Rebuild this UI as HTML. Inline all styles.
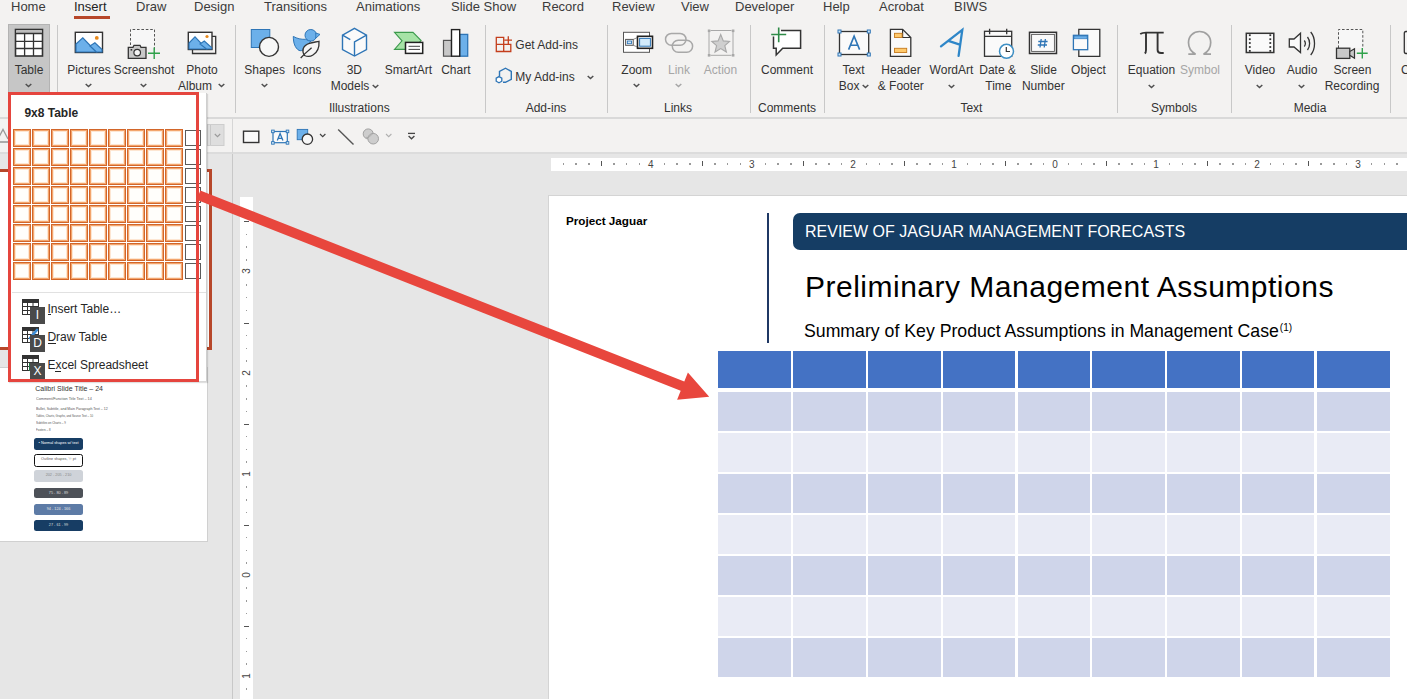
<!DOCTYPE html>
<html><head><meta charset="utf-8">
<style>
*{margin:0;padding:0;box-sizing:border-box}
html,body{width:1407px;height:699px;overflow:hidden;background:#e6e6e6;font-family:"Liberation Sans",sans-serif;position:relative}
.a{position:absolute}
.t{position:absolute;white-space:nowrap;line-height:1}
#top{left:0;top:0;width:1407px;height:119px;background:#f3f2f1}
#rbot{left:0;top:117px;width:1407px;height:2px;background:#d9d9d9}
#qat{left:0;top:119px;width:1407px;height:34px;background:#f3f2f1}
#qbot{left:0;top:152px;width:1407px;height:2px;background:#dcdcdc}
.tab{font-size:13px;color:#3b3b3b;top:0px}
.lb{font-size:12px;color:#333}
.gl{font-size:11.5px;color:#3b3b3b;top:103px}
.dis{color:#a6a6a6}
.sep{position:absolute;width:1px;background:#c8c8c8;top:25px;height:88px}
.cell{width:18px;height:18px;border:1px solid #d2662a;box-shadow:inset 0 0 0 1px #f3a56c,inset 0 0 0 2px #fde6d2;background:#fffefb}
.gcell{width:16px;height:16px;border:1.3px solid #5a5a5a;background:#fff}
.chev{position:absolute;width:6px;height:4px}
</style></head>
<body>
<div id="top" class="a"></div>
<div id="rbot" class="a"></div>
<div id="qat" class="a"></div>
<div id="qbot" class="a"></div>

<!-- tabs -->
<div class="t tab" style="left:11px">Home</div>
<div class="t tab" style="left:74px;color:#222">Insert</div>
<div class="a" style="left:74px;top:16px;width:36px;height:3px;background:#b7472a"></div>
<div class="t tab" style="left:136px">Draw</div>
<div class="t tab" style="left:194px">Design</div>
<div class="t tab" style="left:264px">Transitions</div>
<div class="t tab" style="left:356px">Animations</div>
<div class="t tab" style="left:451px">Slide Show</div>
<div class="t tab" style="left:542px">Record</div>
<div class="t tab" style="left:612px">Review</div>
<div class="t tab" style="left:681px">View</div>
<div class="t tab" style="left:735px">Developer</div>
<div class="t tab" style="left:823px">Help</div>
<div class="t tab" style="left:879px">Acrobat</div>
<div class="t tab" style="left:954px">BIWS</div>

<!-- ribbon -->
<div class="a" style="left:8px;top:24px;width:42px;height:70px;background:#c6c6c6;border:1px solid #b3b3b3"></div>
<div class="sep" style="left:57px"></div>
<div class="sep" style="left:235px"></div>
<div class="sep" style="left:485px"></div>
<div class="sep" style="left:607px"></div>
<div class="sep" style="left:750px"></div>
<div class="sep" style="left:824px"></div>
<div class="sep" style="left:1117px"></div>
<div class="sep" style="left:1231px"></div>
<div class="sep" style="left:1390px"></div>

<!--LABELS-->
<div class="t lb " style="left:-31.0px;width:120px;text-align:center;top:63.6px">Table</div>
<div class="t lb " style="left:29.0px;width:120px;text-align:center;top:63.6px">Pictures</div>
<div class="t lb " style="left:84.0px;width:120px;text-align:center;top:63.6px">Screenshot</div>
<div class="t lb " style="left:142.0px;width:120px;text-align:center;top:63.6px">Photo</div>
<div class="t lb " style="left:204.6px;width:120px;text-align:center;top:63.6px">Shapes</div>
<div class="t lb " style="left:247.0px;width:120px;text-align:center;top:63.6px">Icons</div>
<div class="t lb " style="left:294.3px;width:120px;text-align:center;top:63.6px">3D</div>
<div class="t lb " style="left:348.4px;width:120px;text-align:center;top:63.6px">SmartArt</div>
<div class="t lb " style="left:395.8px;width:120px;text-align:center;top:63.6px">Chart</div>
<div class="t lb " style="left:576.7px;width:120px;text-align:center;top:63.6px">Zoom</div>
<div class="t lb dis" style="left:619.0px;width:120px;text-align:center;top:63.6px">Link</div>
<div class="t lb dis" style="left:660.5px;width:120px;text-align:center;top:63.6px">Action</div>
<div class="t lb " style="left:727.0px;width:120px;text-align:center;top:63.6px">Comment</div>
<div class="t lb " style="left:793.6px;width:120px;text-align:center;top:63.6px">Text</div>
<div class="t lb " style="left:841.0px;width:120px;text-align:center;top:63.6px">Header</div>
<div class="t lb " style="left:840.8px;width:120px;text-align:center;top:79.6px">& Footer</div>
<div class="t lb " style="left:891.5px;width:120px;text-align:center;top:63.6px">WordArt</div>
<div class="t lb " style="left:937.6px;width:120px;text-align:center;top:63.6px">Date &amp;</div>
<div class="t lb " style="left:938.4px;width:120px;text-align:center;top:79.6px">Time</div>
<div class="t lb " style="left:983.5px;width:120px;text-align:center;top:63.6px">Slide</div>
<div class="t lb " style="left:983.3px;width:120px;text-align:center;top:79.6px">Number</div>
<div class="t lb " style="left:1028.4px;width:120px;text-align:center;top:63.6px">Object</div>
<div class="t lb " style="left:1091.5px;width:120px;text-align:center;top:63.6px">Equation</div>
<div class="t lb dis" style="left:1140.0px;width:120px;text-align:center;top:63.6px">Symbol</div>
<div class="t lb " style="left:1200.0px;width:120px;text-align:center;top:63.6px">Video</div>
<div class="t lb " style="left:1242.0px;width:120px;text-align:center;top:63.6px">Audio</div>
<div class="t lb " style="left:1292.4px;width:120px;text-align:center;top:63.6px">Screen</div>
<div class="t lb " style="left:1292.0px;width:120px;text-align:center;top:79.6px">Recording</div>
<div class="t lb " style="left:299.3px;width:120px;text-align:center;top:102.3px">Illustrations</div>
<div class="t lb " style="left:486.0px;width:120px;text-align:center;top:102.3px">Add-ins</div>
<div class="t lb " style="left:618.0px;width:120px;text-align:center;top:102.3px">Links</div>
<div class="t lb " style="left:727.0px;width:120px;text-align:center;top:102.3px">Comments</div>
<div class="t lb " style="left:911.4px;width:120px;text-align:center;top:102.3px">Text</div>
<div class="t lb " style="left:1114.0px;width:120px;text-align:center;top:102.3px">Symbols</div>
<div class="t lb " style="left:1250.0px;width:120px;text-align:center;top:102.3px">Media</div>
<div class="t lb " style="left:178px;top:79.6px">Album</div>
<div class="t lb " style="left:330.7px;top:79.6px">Models</div>
<div class="t lb " style="left:838.8px;top:79.6px">Box</div>
<div class="t lb " style="left:515.3px;top:39.2px">Get Add-ins</div>
<div class="t lb " style="left:515.3px;top:70.8px">My Add-ins</div>
<div class="t lb " style="left:1401px;top:63.6px">C</div>
<svg class="a" style="left:25.2px;top:83.4px" width="7" height="5"><polyline points="0.7,1 3.5,3.6 6.3,1" fill="none" stroke="#505050" stroke-width="1.5"/></svg>
<svg class="a" style="left:85.0px;top:83.4px" width="7" height="5"><polyline points="0.7,1 3.5,3.6 6.3,1" fill="none" stroke="#505050" stroke-width="1.5"/></svg>
<svg class="a" style="left:140.0px;top:83.4px" width="7" height="5"><polyline points="0.7,1 3.5,3.6 6.3,1" fill="none" stroke="#505050" stroke-width="1.5"/></svg>
<svg class="a" style="left:217.5px;top:83.3px" width="7" height="5"><polyline points="0.7,1 3.5,3.6 6.3,1" fill="none" stroke="#505050" stroke-width="1.5"/></svg>
<svg class="a" style="left:261.2px;top:82.8px" width="7" height="5"><polyline points="0.7,1 3.5,3.6 6.3,1" fill="none" stroke="#505050" stroke-width="1.5"/></svg>
<svg class="a" style="left:372.0px;top:83.6px" width="7" height="5"><polyline points="0.7,1 3.5,3.6 6.3,1" fill="none" stroke="#505050" stroke-width="1.5"/></svg>
<svg class="a" style="left:587.0px;top:74.8px" width="7" height="5"><polyline points="0.7,1 3.5,3.6 6.3,1" fill="none" stroke="#505050" stroke-width="1.5"/></svg>
<svg class="a" style="left:632.5px;top:83.1px" width="7" height="5"><polyline points="0.7,1 3.5,3.6 6.3,1" fill="none" stroke="#505050" stroke-width="1.5"/></svg>
<svg class="a" style="left:674.5px;top:83.1px" width="7" height="5"><polyline points="0.7,1 3.5,3.6 6.3,1" fill="none" stroke="#a6a6a6" stroke-width="1.5"/></svg>
<svg class="a" style="left:861.5px;top:84.1px" width="7" height="5"><polyline points="0.7,1 3.5,3.6 6.3,1" fill="none" stroke="#505050" stroke-width="1.5"/></svg>
<svg class="a" style="left:948.0px;top:83.8px" width="7" height="5"><polyline points="0.7,1 3.5,3.6 6.3,1" fill="none" stroke="#505050" stroke-width="1.5"/></svg>
<svg class="a" style="left:1148.0px;top:83.6px" width="7" height="5"><polyline points="0.7,1 3.5,3.6 6.3,1" fill="none" stroke="#505050" stroke-width="1.5"/></svg>
<svg class="a" style="left:1256.0px;top:83.6px" width="7" height="5"><polyline points="0.7,1 3.5,3.6 6.3,1" fill="none" stroke="#505050" stroke-width="1.5"/></svg>
<svg class="a" style="left:1297.8px;top:83.6px" width="7" height="5"><polyline points="0.7,1 3.5,3.6 6.3,1" fill="none" stroke="#505050" stroke-width="1.5"/></svg>
<!--/LABELS-->

<!--ICONS-->
<svg class="a" style="left:0;top:0" width="1407" height="160">
<g fill="none" stroke-linejoin="miter">
<!-- Table -->
<rect x="15.5" y="29.5" width="27" height="26.5" fill="#fff" stroke="#333" stroke-width="1.6"/>
<rect x="16.3" y="30.3" width="25.4" height="3.2" fill="#bdbdbd"/>
<path d="M15.5 33.5H42.5M15.5 41.3H42.5M15.5 48.5H42.5M24.6 33.5V56M33.5 33.5V56" stroke="#333" stroke-width="1.3"/>
<!-- Pictures -->
<rect x="75.3" y="32.3" width="27.2" height="20.2" fill="#fff" stroke="#333" stroke-width="1.4"/>
<path d="M76 44 L82.8 37.8 L96.4 52 L76 52 Z" fill="#6cb0ea" stroke="#2e75b6" stroke-width="1.2"/>
<path d="M90 46 L94.9 42.8 L102 49.5 L102 52 L96.4 52 Z" fill="#6cb0ea" stroke="#2e75b6" stroke-width="1.2"/>
<circle cx="96.8" cy="37.9" r="1.9" fill="#e8891c"/>
<!-- Screenshot -->
<rect x="130.5" y="29.5" width="24" height="18" fill="#f7f7f7"/><path d="M130.5 45V29.5H154.5V53" stroke="#555" stroke-width="1" stroke-dasharray="2.6 1.8"/>
<path d="M128.3 47.3H133L134 45.3H140L141 47.3H146V58.3H128.3Z" fill="#c8c8c8" stroke="#333" stroke-width="1.3"/>
<circle cx="137.2" cy="52.6" r="3.3" fill="#f4f4f4" stroke="#333" stroke-width="1.2"/>
<rect x="130.6" y="49" width="1.6" height="1.6" fill="#333"/>
<path d="M148 53.3H160M154.2 47.5V59" stroke="#2fa14a" stroke-width="1.4"/>
<!-- Photo Album -->
<path d="M212 36.3H215.7V53.5H192.5V49.5" fill="none" stroke="#333" stroke-width="1.3"/>
<rect x="188.3" y="32.3" width="23.7" height="17.2" fill="#fff" stroke="#333" stroke-width="1.4"/>
<path d="M189 43 L195 36.8 L206.5 49 L189 49 Z" fill="#6cb0ea" stroke="#2e75b6" stroke-width="1.1"/>
<path d="M200 44 L204.3 41 L211.5 47.5 L211.5 49 L206.5 49 Z" fill="#6cb0ea" stroke="#2e75b6" stroke-width="1.1"/>
<circle cx="207" cy="36.5" r="1.6" fill="#e8891c"/>
<!-- Shapes -->
<rect x="251.3" y="29.5" width="18.5" height="18" fill="#6cb0ea" stroke="#2e75b6" stroke-width="1"/>
<circle cx="269" cy="46.9" r="9.5" fill="#f7f7f7" stroke="#333" stroke-width="1.4"/>
<!-- Icons: duck + leaf -->
<path d="M293.3 36.4 C297 38.6 301 39.5 305.5 39.3 L311 41 L304 49.5 C302 50.8 300.3 51 299 50.4 C295 48 293.3 43 293.3 36.4 Z" fill="#6cb0ea" stroke="#2e75b6" stroke-width="1"/>
<circle cx="310.8" cy="35.3" r="5.8" fill="#6cb0ea" stroke="#2e75b6" stroke-width="1"/>
<path d="M315.8 33 L320 34.4 L315.8 38.2 Z" fill="#6cb0ea" stroke="#2e75b6" stroke-width="0.9"/>
<path d="M304.5 55.5 C301.5 51 302.5 45.5 309.5 43.3 C312.5 42.3 316 42 319 41.3 C319.3 46 318 52 313 55 C310.5 56.6 307 56.6 304.5 55.5 Z" fill="#f5f5f5" stroke="#333" stroke-width="1.3"/>
<path d="M300.7 58 L305 53.6 L311.6 47.8" stroke="#333" stroke-width="1.3"/>
<!-- 3D Models cube -->
<path d="M354.5 28.3 L366.5 35.2 L366.5 49.5 L354.5 56 L342.5 49.5 L342.5 35.2 Z" fill="#fafafa" stroke="#2e75b6" stroke-width="1.4"/>
<path d="M366.5 35.2 L354.5 41.8 L354.5 56 M342.5 35.2 L350.3 39.7" stroke="#2e75b6" stroke-width="1.4"/>
<!-- SmartArt -->
<path d="M394.5 32.4 L413 32.4 L421.1 40.6 L413 49.4 L394.5 49.4 L402 40.8 Z" fill="#a6e3a6" stroke="#3c9a4d" stroke-width="1.1"/>
<rect x="405.5" y="42.4" width="17.2" height="11" fill="#fff" stroke="#222" stroke-width="1.5"/>
<path d="M408.5 46.3H420M408.5 49.4H420" stroke="#444" stroke-width="1"/>
<!-- Chart -->
<rect x="443.5" y="40.4" width="8" height="15.8" fill="#c8c8c8" stroke="#555" stroke-width="1.2"/>
<rect x="459.7" y="34.4" width="8" height="21.8" fill="#6cb0ea" stroke="#2e75b6" stroke-width="1.3"/>
<rect x="451.5" y="29.6" width="8.2" height="26.6" fill="#fff" stroke="#222" stroke-width="1.4"/>
<!-- Get Add-ins -->
<path d="M496.3 37.3H503.7V51.5H496.3ZM496.3 44.3H510.8V51.5H503.7M508.3 36.3V44M504.5 40.1H512" stroke="#c43e1c" stroke-width="1.3"/>
<!-- My Add-ins -->
<path d="M499.5 76.5 L499.5 71.4 L505.5 68.2 L511.3 71.4 L511.3 79.3 L505.5 82.3 L503 82.3" stroke="#2e75b6" stroke-width="1.4"/>
<path d="M499 76.6 L501.8 78.2 L501.8 81.2 L499 82.8 L496.2 81.2 L496.2 78.2 Z" fill="#fff" stroke="#2e75b6" stroke-width="1.3"/>
<!-- Zoom -->
<rect x="623.5" y="32.3" width="26" height="20" fill="#fff" stroke="#555" stroke-width="1"/>
<path d="M633.3 39.4 L637.5 37.5 M633.3 45.2 L637.5 47.2" stroke="#888" stroke-width="0.9"/>
<rect x="625.6" y="39.4" width="7.6" height="5.9" fill="#fff" stroke="#555" stroke-width="1"/>
<rect x="627.3" y="41" width="4.2" height="2.7" fill="#cfe6f7" stroke="#2e75b6" stroke-width="0.9"/>
<rect x="637.5" y="36.3" width="15" height="12" fill="#fff" stroke="#222" stroke-width="1.6"/>
<rect x="639.6" y="38.4" width="10.8" height="7.8" fill="#d3ebfb" stroke="#2e75b6" stroke-width="1"/>
<!-- Link (disabled) -->
<rect x="665.5" y="33.4" width="20.5" height="11.8" rx="5.9" stroke="#a8a8a8" stroke-width="1.5"/>
<rect x="672.3" y="40.3" width="20.3" height="11.9" rx="5.9" stroke="#a8a8a8" stroke-width="1.5"/>
<!-- Action (disabled) -->
<path d="M709 31.5V54.5M733 31.5V54.5M710.5 30.5H731.5M710.5 55.3H731.5" stroke="#a8a8a8" stroke-width="1"/>
<rect x="707.8" y="29.5" width="2.6" height="2.6" fill="#a8a8a8"/><rect x="731.8" y="29.5" width="2.6" height="2.6" fill="#a8a8a8"/>
<rect x="707.8" y="54" width="2.6" height="2.6" fill="#a8a8a8"/><rect x="731.8" y="54" width="2.6" height="2.6" fill="#a8a8a8"/>
<path d="M720.7 34.5 L723.3 40.9 L729.6 41.4 L724.8 45.7 L726.4 52 L720.7 48.6 L715 52 L716.6 45.7 L711.8 41.4 L718.1 40.9 Z" fill="#cfcfcf" stroke="#a8a8a8" stroke-width="1.1"/>
<!-- Comment -->
<path d="M781 30.4 H800.6 V48.3 H782.7 L776.2 55 V48.3 H773.5 V36.5" fill="#fff" stroke="#333" stroke-width="1.5"/>
<path d="M771.2 34.5H786.2M778.7 27.4V42.2" stroke="#2e8b47" stroke-width="1.6"/>
<!-- Text Box -->
<rect x="839.5" y="31.5" width="29.2" height="23" fill="#fafafa" stroke="#333" stroke-width="1.3"/>
<g fill="#cfe6f7" stroke="#2e75b6" stroke-width="1"><rect x="838" y="30" width="3" height="3"/><rect x="867.3" y="30" width="3" height="3"/><rect x="838" y="53" width="3" height="3"/><rect x="867.3" y="53" width="3" height="3"/></g>
<path d="M848.6 49.6 L854.1 36.2 L859.6 49.6 M850.3 45.3 H857.9" stroke="#2e75b6" stroke-width="1.6"/>
<!-- Header & Footer -->
<path d="M890.4 29.4 H902.6 L910.8 37.5 V56.4 H890.4 Z" fill="#fafafa" stroke="#333" stroke-width="1.3"/>
<path d="M902.6 29.4 V37.5 H910.8" stroke="#333" stroke-width="1.2"/>
<rect x="894.5" y="33.3" width="7.6" height="4.2" fill="#ffc96b" stroke="#c67a1e" stroke-width="0.9"/>
<rect x="894.5" y="48.3" width="12.2" height="4.2" fill="#ffc96b" stroke="#c67a1e" stroke-width="0.9"/>
<!-- WordArt -->
<path d="M941 46.3 L962.3 29.8 L958.6 55.9 M949.2 41.2 L959.8 44.6" stroke="#2e86c8" stroke-width="2.3" stroke-linecap="round"/>
<!-- Date & Time -->
<rect x="984.5" y="31.3" width="27.2" height="25" fill="#fafafa" stroke="#333" stroke-width="1.3"/>
<path d="M984.5 36.3H1011.7M989.6 28.8V34.3M1006.7 28.8V34.3" stroke="#333" stroke-width="1.3"/>
<circle cx="1006.5" cy="51.3" r="7" fill="#fff" stroke="#3d8fc4" stroke-width="1.5"/>
<path d="M1006.3 47V51.5H1010" stroke="#333" stroke-width="1.2"/>
<!-- Slide Number -->
<rect x="1029.5" y="32.3" width="27" height="21.2" fill="#fafafa" stroke="#333" stroke-width="1.5"/>
<rect x="1031.6" y="34.4" width="22.8" height="17" fill="#fafafa" stroke="#555" stroke-width="0.9"/>
<path d="M1041.2 39 L1040 47.5 M1045.4 39 L1044.2 47.5 M1038.3 41.5 H1047.6 M1037.8 45 H1047" stroke="#2e75b6" stroke-width="1.3"/>
<!-- Object -->
<path d="M1078.8 35 V29.3 H1099.8 V56.4 H1078.8 V50" fill="#fafafa" stroke="#333" stroke-width="1.3"/>
<rect x="1073.4" y="35.3" width="14.3" height="14.4" fill="#fafafa" stroke="#2e75b6" stroke-width="1.3"/>
<rect x="1074" y="36" width="13.1" height="2.8" fill="#6cb0ea" stroke="#2e75b6" stroke-width="0.6"/>
<!-- Equation pi -->
<path d="M1140.2 34 C1142 32.8 1144 32.6 1146 32.6 H1163.7" stroke="#333" stroke-width="1.9"/>
<path d="M1146 32.6 V50 C1146 52 1145.5 53 1144.8 53.5" stroke="#333" stroke-width="1.9"/>
<path d="M1157.6 32.6 V50 C1157.6 52.3 1159 53 1161 53 H1163.7" stroke="#333" stroke-width="1.9"/>
<!-- Symbol omega -->
<path d="M1188.3 54.2 H1195.6 C1190.5 51.5 1188.5 47 1188.5 42.6 C1188.5 36 1193.5 31.5 1199.6 31.5 C1205.7 31.5 1210.7 36 1210.7 42.6 C1210.7 47 1208.7 51.5 1203.5 54.2 H1211" stroke="#a0a0a0" stroke-width="1.7"/>
<!-- Video -->
<rect x="1246.3" y="33.3" width="27.5" height="19.2" fill="#fafafa" stroke="#333" stroke-width="1.5"/>
<g fill="#333"><rect x="1248.9" y="34.3" width="1.8" height="1.8"/><rect x="1248.9" y="38.3" width="1.8" height="1.8"/><rect x="1248.9" y="42.1" width="1.8" height="1.8"/><rect x="1248.9" y="46.1" width="1.8" height="1.8"/><rect x="1248.9" y="50" width="1.8" height="1.8"/>
<rect x="1269.4" y="34.3" width="1.8" height="1.8"/><rect x="1269.4" y="38.3" width="1.8" height="1.8"/><rect x="1269.4" y="42.1" width="1.8" height="1.8"/><rect x="1269.4" y="46.1" width="1.8" height="1.8"/><rect x="1269.4" y="50" width="1.8" height="1.8"/></g>
<!-- Audio -->
<path d="M1289.3 39 H1294 L1300.5 33.3 V52.5 L1294 47 H1289.3 Z" fill="#fafafa" stroke="#333" stroke-width="1.3"/>
<path d="M1304.3 40.5 C1305.6 42.3 1305.6 44.7 1304.3 46.5 M1307.5 37 C1310.3 40.5 1310.3 46.5 1307.5 50 M1310.7 32 C1315.8 38 1315.8 49 1310.7 55" stroke="#333" stroke-width="1.3"/>
<!-- Screen Recording -->
<rect x="1338.5" y="29.5" width="24.3" height="18.5" fill="#f7f7f7"/><path d="M1338.5 48V29.5H1362.8V48" stroke="#555" stroke-width="1" stroke-dasharray="2.6 1.8"/>
<rect x="1336.5" y="48.2" width="13.3" height="10.2" fill="#c8c8c8" stroke="#333" stroke-width="1.3"/>
<path d="M1349.8 51.4 L1354.5 48.7 V58.2 L1349.8 55.3 Z" fill="#c8c8c8" stroke="#333" stroke-width="1.2"/>
<path d="M1356.8 53.2H1367.7M1362.3 48V58.5" stroke="#2fa14a" stroke-width="1.4"/>
<!-- partial -->
<path d="M1407 31.5 H1406 C1404.8 31.5 1404.3 32.5 1404.3 33.5 V51.5 C1404.3 52.5 1404.8 53.5 1406 53.5 H1407" stroke="#333" stroke-width="1.3"/>
<!-- QAT row -->
<rect x="207.5" y="124.5" width="16.5" height="21" fill="#dedede" stroke="#cdcdcd" stroke-width="1"/>
<path d="M210.5 125V145" stroke="#c8c8c8" stroke-width="1"/>
<polyline points="214.8,134 217.5,136.7 220.2,134" stroke="#9a9a9a" stroke-width="1.1"/>
<rect x="243.5" y="131.2" width="15.3" height="11.3" fill="#fafafa" stroke="#333" stroke-width="1.4"/>
<rect x="273" y="131.5" width="14.3" height="11.2" fill="#fafafa" stroke="#2e75b6" stroke-width="1.2"/>
<g fill="#cfe6f7" stroke="#2e75b6" stroke-width="0.9"><rect x="271.6" y="130.1" width="2.6" height="2.6"/><rect x="286.2" y="130.1" width="2.6" height="2.6"/><rect x="271.6" y="141.6" width="2.6" height="2.6"/><rect x="286.2" y="141.6" width="2.6" height="2.6"/></g>
<path d="M277.3 140.6 L280.1 133.5 L282.9 140.6 M278.3 138.3 H282" stroke="#2e75b6" stroke-width="1.3"/>
<rect x="297.2" y="129.4" width="10.5" height="10.3" fill="#6cb0ea" stroke="#2e75b6" stroke-width="0.9"/>
<circle cx="307.4" cy="139.2" r="5.2" fill="#f7f7f7" stroke="#333" stroke-width="1.3"/>
<polyline points="320,134 322.7,136.7 325.4,134" stroke="#444" stroke-width="1.2"/>
<path d="M338.2 129.5 L353.5 144.5" stroke="#555" stroke-width="1.4"/>
<circle cx="368.2" cy="133.9" r="5" fill="#cdcdcd" stroke="#a2a2a2" stroke-width="1"/>
<circle cx="373.2" cy="138.7" r="5.3" fill="#cdcdcd" stroke="#a2a2a2" stroke-width="1"/>
<path d="M366 137 C368 139 371 135 373 133.5" stroke="#a2a2a2" stroke-width="0.8"/>
<polyline points="386,134 388.7,136.7 391.4,134" stroke="#b0b0b0" stroke-width="1.1"/>
<path d="M408 133.4H415" stroke="#444" stroke-width="1.3"/>
<polyline points="408.6,136 411.5,138.8 414.4,136" stroke="#444" stroke-width="1.3"/>
<!-- 'A' left of menu -->
<path d="M-2 139 L3 129.5 L8 139" stroke="#9a9a9a" stroke-width="1.3"/>
<rect x="0" y="141" width="9" height="2" fill="#ababab"/>
</g>
</svg>

<!--/ICONS-->
<!-- MAIN -->
<div class="a" style="left:232px;top:154px;width:1px;height:545px;background:#c8c8c8"></div>
<div class="a" style="left:232px;top:119px;width:1px;height:34px;background:#d6d6d6"></div>
<!-- thumbnails -->
<div class="a" style="left:-30px;top:169px;width:242px;height:181px;border:3px solid #b7472a;background:#fff"></div>
<div class="a" style="left:-30px;top:367px;width:238px;height:175px;background:#fff;border:1px solid #d0d0d0"></div>
<!--TH2-->
<div class="t" style="left:35.3px;top:384.5px;font-size:7px;color:#333">Calibri Slide Title – 24</div>
<div class="t" style="left:35.5px;top:397.4px;font-size:4.2px;color:#555;transform-origin:0 0;transform:scaleX(0.895)">Comment/Function Title Text – 14</div>
<div class="t" style="left:35.5px;top:406.5px;font-size:4.2px;color:#555;transform-origin:0 0;transform:scaleX(0.841)">Bullet, Subtitle, and Main Paragraph Text – 12</div>
<div class="t" style="left:35.5px;top:414.9px;font-size:3.4px;color:#555;transform-origin:0 0;transform:scaleX(0.833)">Tables, Charts, Graphs, and Source Text – 10</div>
<div class="t" style="left:35.5px;top:421.8px;font-size:3.4px;color:#555;transform-origin:0 0;transform:scaleX(0.868)">Subtitles on Charts – 9</div>
<div class="t" style="left:35.5px;top:428.6px;font-size:3.4px;color:#555;transform-origin:0 0;transform:scaleX(0.853)">Footers – 8</div>
<div class="a" style="left:34.2px;top:438.4px;width:48.7px;height:11.4px;background:#173d64;border:none;border-radius:2.5px;color:#fff;font-size:3.8px;line-height:11.4px;text-align:center;white-space:nowrap;overflow:hidden">• Normal shapes w/ text</div>
<div class="a" style="left:34.2px;top:454.4px;width:48.7px;height:12.6px;background:#fff;border:1.6px solid #111;border-radius:2.5px;color:#555;font-size:3.8px;line-height:9.6px;text-align:center;white-space:nowrap;overflow:hidden">Outline shapes, ½ pt</div>
<div class="a" style="left:34.2px;top:470.4px;width:48.7px;height:11.4px;background:#cfd3d9;border:none;border-radius:2.5px;color:#888;font-size:3.8px;line-height:11.4px;text-align:center;white-space:nowrap;overflow:hidden">202 - 205 - 210</div>
<div class="a" style="left:34.2px;top:487.5px;width:48.7px;height:10.3px;background:#4d5158;border:none;border-radius:2.5px;color:#ddd;font-size:3.8px;line-height:10.3px;text-align:center;white-space:nowrap;overflow:hidden">75 - 80 - 89</div>
<div class="a" style="left:34.2px;top:503.6px;width:48.7px;height:11.0px;background:#5d7ba6;border:none;border-radius:2.5px;color:#e8e8e8;font-size:3.8px;line-height:11.0px;text-align:center;white-space:nowrap;overflow:hidden">94 - 124 - 166</div>
<div class="a" style="left:34.2px;top:519.6px;width:48.7px;height:11.4px;background:#173d64;border:none;border-radius:2.5px;color:#ddd;font-size:3.8px;line-height:11.4px;text-align:center;white-space:nowrap;overflow:hidden">27 - 61 - 99</div>
<!--/TH2-->
<!-- vertical ruler -->
<div class="a" style="left:240px;top:197px;width:13px;height:502px;background:#fff"></div>
<!--VR-->
<div class="a" style="left:245.5px;top:208.6px;width:1.5px;height:1.5px;background:#9a9a9a"></div>
<div class="a" style="left:244px;top:221.4px;width:5px;height:1px;background:#555"></div>
<div class="a" style="left:245.5px;top:233.8px;width:1.5px;height:1.5px;background:#9a9a9a"></div>
<div class="a" style="left:245.5px;top:246.4px;width:1.5px;height:1.5px;background:#9a9a9a"></div>
<div class="a" style="left:245.5px;top:259.1px;width:1.5px;height:1.5px;background:#9a9a9a"></div>
<div class="t" style="left:236.5px;top:266.4px;width:20px;height:10px;text-align:center;font-size:10px;color:#444;transform:rotate(-90deg)">3</div>
<div class="a" style="left:245.5px;top:284.3px;width:1.5px;height:1.5px;background:#9a9a9a"></div>
<div class="a" style="left:245.5px;top:296.9px;width:1.5px;height:1.5px;background:#9a9a9a"></div>
<div class="a" style="left:245.5px;top:309.6px;width:1.5px;height:1.5px;background:#9a9a9a"></div>
<div class="a" style="left:244px;top:322.5px;width:5px;height:1px;background:#555"></div>
<div class="a" style="left:245.5px;top:334.8px;width:1.5px;height:1.5px;background:#9a9a9a"></div>
<div class="a" style="left:245.5px;top:347.5px;width:1.5px;height:1.5px;background:#9a9a9a"></div>
<div class="a" style="left:245.5px;top:360.1px;width:1.5px;height:1.5px;background:#9a9a9a"></div>
<div class="t" style="left:236.5px;top:367.5px;width:20px;height:10px;text-align:center;font-size:10px;color:#444;transform:rotate(-90deg)">2</div>
<div class="a" style="left:245.5px;top:385.3px;width:1.5px;height:1.5px;background:#9a9a9a"></div>
<div class="a" style="left:245.5px;top:398.0px;width:1.5px;height:1.5px;background:#9a9a9a"></div>
<div class="a" style="left:245.5px;top:410.6px;width:1.5px;height:1.5px;background:#9a9a9a"></div>
<div class="a" style="left:244px;top:423.5px;width:5px;height:1px;background:#555"></div>
<div class="a" style="left:245.5px;top:435.8px;width:1.5px;height:1.5px;background:#9a9a9a"></div>
<div class="a" style="left:245.5px;top:448.5px;width:1.5px;height:1.5px;background:#9a9a9a"></div>
<div class="a" style="left:245.5px;top:461.1px;width:1.5px;height:1.5px;background:#9a9a9a"></div>
<div class="t" style="left:236.5px;top:468.5px;width:20px;height:10px;text-align:center;font-size:10px;color:#444;transform:rotate(-90deg)">1</div>
<div class="a" style="left:245.5px;top:486.4px;width:1.5px;height:1.5px;background:#9a9a9a"></div>
<div class="a" style="left:245.5px;top:499.0px;width:1.5px;height:1.5px;background:#9a9a9a"></div>
<div class="a" style="left:245.5px;top:511.6px;width:1.5px;height:1.5px;background:#9a9a9a"></div>
<div class="a" style="left:244px;top:524.5px;width:5px;height:1px;background:#555"></div>
<div class="a" style="left:245.5px;top:536.9px;width:1.5px;height:1.5px;background:#9a9a9a"></div>
<div class="a" style="left:245.5px;top:549.5px;width:1.5px;height:1.5px;background:#9a9a9a"></div>
<div class="a" style="left:245.5px;top:562.1px;width:1.5px;height:1.5px;background:#9a9a9a"></div>
<div class="t" style="left:236.5px;top:569.5px;width:20px;height:10px;text-align:center;font-size:10px;color:#444;transform:rotate(-90deg)">0</div>
<div class="a" style="left:245.5px;top:587.4px;width:1.5px;height:1.5px;background:#9a9a9a"></div>
<div class="a" style="left:245.5px;top:600.0px;width:1.5px;height:1.5px;background:#9a9a9a"></div>
<div class="a" style="left:245.5px;top:612.6px;width:1.5px;height:1.5px;background:#9a9a9a"></div>
<div class="a" style="left:244px;top:625.5px;width:5px;height:1px;background:#555"></div>
<div class="a" style="left:245.5px;top:637.9px;width:1.5px;height:1.5px;background:#9a9a9a"></div>
<div class="a" style="left:245.5px;top:650.5px;width:1.5px;height:1.5px;background:#9a9a9a"></div>
<div class="a" style="left:245.5px;top:663.1px;width:1.5px;height:1.5px;background:#9a9a9a"></div>
<div class="t" style="left:236.5px;top:670.5px;width:20px;height:10px;text-align:center;font-size:10px;color:#444;transform:rotate(-90deg)">1</div>
<div class="a" style="left:245.5px;top:688.4px;width:1.5px;height:1.5px;background:#9a9a9a"></div>
<!--/VR-->
<!-- horizontal ruler -->
<div class="a" style="left:551px;top:158px;width:856px;height:13px;background:#fff"></div>
<!--HR-->
<div class="a" style="left:562.8px;top:163px;width:1.5px;height:1.5px;background:#9a9a9a"></div>
<div class="a" style="left:575.4px;top:163px;width:1.5px;height:1.5px;background:#9a9a9a"></div>
<div class="a" style="left:588.0px;top:163px;width:1.5px;height:1.5px;background:#9a9a9a"></div>
<div class="a" style="left:600.9px;top:161px;width:1px;height:5px;background:#555"></div>
<div class="a" style="left:613.3px;top:163px;width:1.5px;height:1.5px;background:#9a9a9a"></div>
<div class="a" style="left:625.9px;top:163px;width:1.5px;height:1.5px;background:#9a9a9a"></div>
<div class="a" style="left:638.5px;top:163px;width:1.5px;height:1.5px;background:#9a9a9a"></div>
<div class="t" style="left:640.9px;width:20px;text-align:center;top:159.5px;font-size:10px;color:#444">4</div>
<div class="a" style="left:663.8px;top:163px;width:1.5px;height:1.5px;background:#9a9a9a"></div>
<div class="a" style="left:676.4px;top:163px;width:1.5px;height:1.5px;background:#9a9a9a"></div>
<div class="a" style="left:689.1px;top:163px;width:1.5px;height:1.5px;background:#9a9a9a"></div>
<div class="a" style="left:701.9px;top:161px;width:1px;height:5px;background:#555"></div>
<div class="a" style="left:714.3px;top:163px;width:1.5px;height:1.5px;background:#9a9a9a"></div>
<div class="a" style="left:726.9px;top:163px;width:1.5px;height:1.5px;background:#9a9a9a"></div>
<div class="a" style="left:739.6px;top:163px;width:1.5px;height:1.5px;background:#9a9a9a"></div>
<div class="t" style="left:741.9px;width:20px;text-align:center;top:159.5px;font-size:10px;color:#444">3</div>
<div class="a" style="left:764.8px;top:163px;width:1.5px;height:1.5px;background:#9a9a9a"></div>
<div class="a" style="left:777.4px;top:163px;width:1.5px;height:1.5px;background:#9a9a9a"></div>
<div class="a" style="left:790.1px;top:163px;width:1.5px;height:1.5px;background:#9a9a9a"></div>
<div class="a" style="left:803.0px;top:161px;width:1px;height:5px;background:#555"></div>
<div class="a" style="left:815.3px;top:163px;width:1.5px;height:1.5px;background:#9a9a9a"></div>
<div class="a" style="left:828.0px;top:163px;width:1.5px;height:1.5px;background:#9a9a9a"></div>
<div class="a" style="left:840.6px;top:163px;width:1.5px;height:1.5px;background:#9a9a9a"></div>
<div class="t" style="left:843.0px;width:20px;text-align:center;top:159.5px;font-size:10px;color:#444">2</div>
<div class="a" style="left:865.8px;top:163px;width:1.5px;height:1.5px;background:#9a9a9a"></div>
<div class="a" style="left:878.5px;top:163px;width:1.5px;height:1.5px;background:#9a9a9a"></div>
<div class="a" style="left:891.1px;top:163px;width:1.5px;height:1.5px;background:#9a9a9a"></div>
<div class="a" style="left:904.0px;top:161px;width:1px;height:5px;background:#555"></div>
<div class="a" style="left:916.3px;top:163px;width:1.5px;height:1.5px;background:#9a9a9a"></div>
<div class="a" style="left:929.0px;top:163px;width:1.5px;height:1.5px;background:#9a9a9a"></div>
<div class="a" style="left:941.6px;top:163px;width:1.5px;height:1.5px;background:#9a9a9a"></div>
<div class="t" style="left:944.0px;width:20px;text-align:center;top:159.5px;font-size:10px;color:#444">1</div>
<div class="a" style="left:966.9px;top:163px;width:1.5px;height:1.5px;background:#9a9a9a"></div>
<div class="a" style="left:979.5px;top:163px;width:1.5px;height:1.5px;background:#9a9a9a"></div>
<div class="a" style="left:992.1px;top:163px;width:1.5px;height:1.5px;background:#9a9a9a"></div>
<div class="a" style="left:1005.0px;top:161px;width:1px;height:5px;background:#555"></div>
<div class="a" style="left:1017.4px;top:163px;width:1.5px;height:1.5px;background:#9a9a9a"></div>
<div class="a" style="left:1030.0px;top:163px;width:1.5px;height:1.5px;background:#9a9a9a"></div>
<div class="a" style="left:1042.6px;top:163px;width:1.5px;height:1.5px;background:#9a9a9a"></div>
<div class="t" style="left:1045.0px;width:20px;text-align:center;top:159.5px;font-size:10px;color:#444">0</div>
<div class="a" style="left:1067.9px;top:163px;width:1.5px;height:1.5px;background:#9a9a9a"></div>
<div class="a" style="left:1080.5px;top:163px;width:1.5px;height:1.5px;background:#9a9a9a"></div>
<div class="a" style="left:1093.1px;top:163px;width:1.5px;height:1.5px;background:#9a9a9a"></div>
<div class="a" style="left:1106.0px;top:161px;width:1px;height:5px;background:#555"></div>
<div class="a" style="left:1118.4px;top:163px;width:1.5px;height:1.5px;background:#9a9a9a"></div>
<div class="a" style="left:1131.0px;top:163px;width:1.5px;height:1.5px;background:#9a9a9a"></div>
<div class="a" style="left:1143.6px;top:163px;width:1.5px;height:1.5px;background:#9a9a9a"></div>
<div class="t" style="left:1146.0px;width:20px;text-align:center;top:159.5px;font-size:10px;color:#444">1</div>
<div class="a" style="left:1168.9px;top:163px;width:1.5px;height:1.5px;background:#9a9a9a"></div>
<div class="a" style="left:1181.5px;top:163px;width:1.5px;height:1.5px;background:#9a9a9a"></div>
<div class="a" style="left:1194.2px;top:163px;width:1.5px;height:1.5px;background:#9a9a9a"></div>
<div class="a" style="left:1207.0px;top:161px;width:1px;height:5px;background:#555"></div>
<div class="a" style="left:1219.4px;top:163px;width:1.5px;height:1.5px;background:#9a9a9a"></div>
<div class="a" style="left:1232.0px;top:163px;width:1.5px;height:1.5px;background:#9a9a9a"></div>
<div class="a" style="left:1244.7px;top:163px;width:1.5px;height:1.5px;background:#9a9a9a"></div>
<div class="t" style="left:1247.0px;width:20px;text-align:center;top:159.5px;font-size:10px;color:#444">2</div>
<div class="a" style="left:1269.9px;top:163px;width:1.5px;height:1.5px;background:#9a9a9a"></div>
<div class="a" style="left:1282.5px;top:163px;width:1.5px;height:1.5px;background:#9a9a9a"></div>
<div class="a" style="left:1295.2px;top:163px;width:1.5px;height:1.5px;background:#9a9a9a"></div>
<div class="a" style="left:1308.0px;top:161px;width:1px;height:5px;background:#555"></div>
<div class="a" style="left:1320.4px;top:163px;width:1.5px;height:1.5px;background:#9a9a9a"></div>
<div class="a" style="left:1333.1px;top:163px;width:1.5px;height:1.5px;background:#9a9a9a"></div>
<div class="a" style="left:1345.7px;top:163px;width:1.5px;height:1.5px;background:#9a9a9a"></div>
<div class="t" style="left:1348.1px;width:20px;text-align:center;top:159.5px;font-size:10px;color:#444">3</div>
<div class="a" style="left:1370.9px;top:163px;width:1.5px;height:1.5px;background:#9a9a9a"></div>
<div class="a" style="left:1383.6px;top:163px;width:1.5px;height:1.5px;background:#9a9a9a"></div>
<div class="a" style="left:1396.2px;top:163px;width:1.5px;height:1.5px;background:#9a9a9a"></div>
<!--/HR-->
<!-- slide -->
<div class="a" style="left:548px;top:195px;width:900px;height:600px;background:#fff;border:1px solid #d4d4d4"></div>
<div class="t" style="left:566px;top:215.3px;font-size:11.7px;font-weight:bold;color:#000">Project Jaguar</div>
<div class="a" style="left:767px;top:213px;width:2px;height:130px;background:#1f3864"></div>
<div class="a" style="left:792.5px;top:213px;width:640px;height:37px;background:#153d64;border-radius:7px 0 0 7px"></div>
<div class="t" style="left:805px;top:224px;font-size:16px;color:#fff">REVIEW OF JAGUAR MANAGEMENT FORECASTS</div>
<div class="t" style="left:805px;top:271.6px;font-size:30px;letter-spacing:0.5px;color:#000">Preliminary Management Assumptions</div>
<div class="t" style="left:804px;top:323px;font-size:17.7px;color:#000">Summary of Key Product Assumptions in Management Case<sup style="font-size:10px;vertical-align:6px;margin-left:1px">(1)</sup></div>
<!--TABLE-->
<div class="a" style="left:717.6px;top:351px;width:73.7px;height:37.4px;background:#4472c4"></div>
<div class="a" style="left:793.3px;top:351px;width:72.7px;height:37.4px;background:#4472c4"></div>
<div class="a" style="left:868.1px;top:351px;width:72.7px;height:37.4px;background:#4472c4"></div>
<div class="a" style="left:942.8px;top:351px;width:72.7px;height:37.4px;background:#4472c4"></div>
<div class="a" style="left:1017.5px;top:351px;width:72.7px;height:37.4px;background:#4472c4"></div>
<div class="a" style="left:1092.3px;top:351px;width:72.7px;height:37.4px;background:#4472c4"></div>
<div class="a" style="left:1167.0px;top:351px;width:72.7px;height:37.4px;background:#4472c4"></div>
<div class="a" style="left:1241.7px;top:351px;width:72.7px;height:37.4px;background:#4472c4"></div>
<div class="a" style="left:1316.5px;top:351px;width:73.7px;height:37.4px;background:#4472c4"></div>
<div class="a" style="left:717.6px;top:392.4px;width:73.7px;height:38.6px;background:#cfd5ea"></div>
<div class="a" style="left:793.3px;top:392.4px;width:72.7px;height:38.6px;background:#cfd5ea"></div>
<div class="a" style="left:868.1px;top:392.4px;width:72.7px;height:38.6px;background:#cfd5ea"></div>
<div class="a" style="left:942.8px;top:392.4px;width:72.7px;height:38.6px;background:#cfd5ea"></div>
<div class="a" style="left:1017.5px;top:392.4px;width:72.7px;height:38.6px;background:#cfd5ea"></div>
<div class="a" style="left:1092.3px;top:392.4px;width:72.7px;height:38.6px;background:#cfd5ea"></div>
<div class="a" style="left:1167.0px;top:392.4px;width:72.7px;height:38.6px;background:#cfd5ea"></div>
<div class="a" style="left:1241.7px;top:392.4px;width:72.7px;height:38.6px;background:#cfd5ea"></div>
<div class="a" style="left:1316.5px;top:392.4px;width:73.7px;height:38.6px;background:#cfd5ea"></div>
<div class="a" style="left:717.6px;top:433.0px;width:73.7px;height:39.3px;background:#e9ebf5"></div>
<div class="a" style="left:793.3px;top:433.0px;width:72.7px;height:39.3px;background:#e9ebf5"></div>
<div class="a" style="left:868.1px;top:433.0px;width:72.7px;height:39.3px;background:#e9ebf5"></div>
<div class="a" style="left:942.8px;top:433.0px;width:72.7px;height:39.3px;background:#e9ebf5"></div>
<div class="a" style="left:1017.5px;top:433.0px;width:72.7px;height:39.3px;background:#e9ebf5"></div>
<div class="a" style="left:1092.3px;top:433.0px;width:72.7px;height:39.3px;background:#e9ebf5"></div>
<div class="a" style="left:1167.0px;top:433.0px;width:72.7px;height:39.3px;background:#e9ebf5"></div>
<div class="a" style="left:1241.7px;top:433.0px;width:72.7px;height:39.3px;background:#e9ebf5"></div>
<div class="a" style="left:1316.5px;top:433.0px;width:73.7px;height:39.3px;background:#e9ebf5"></div>
<div class="a" style="left:717.6px;top:474.3px;width:73.7px;height:38.9px;background:#cfd5ea"></div>
<div class="a" style="left:793.3px;top:474.3px;width:72.7px;height:38.9px;background:#cfd5ea"></div>
<div class="a" style="left:868.1px;top:474.3px;width:72.7px;height:38.9px;background:#cfd5ea"></div>
<div class="a" style="left:942.8px;top:474.3px;width:72.7px;height:38.9px;background:#cfd5ea"></div>
<div class="a" style="left:1017.5px;top:474.3px;width:72.7px;height:38.9px;background:#cfd5ea"></div>
<div class="a" style="left:1092.3px;top:474.3px;width:72.7px;height:38.9px;background:#cfd5ea"></div>
<div class="a" style="left:1167.0px;top:474.3px;width:72.7px;height:38.9px;background:#cfd5ea"></div>
<div class="a" style="left:1241.7px;top:474.3px;width:72.7px;height:38.9px;background:#cfd5ea"></div>
<div class="a" style="left:1316.5px;top:474.3px;width:73.7px;height:38.9px;background:#cfd5ea"></div>
<div class="a" style="left:717.6px;top:515.2px;width:73.7px;height:39.0px;background:#e9ebf5"></div>
<div class="a" style="left:793.3px;top:515.2px;width:72.7px;height:39.0px;background:#e9ebf5"></div>
<div class="a" style="left:868.1px;top:515.2px;width:72.7px;height:39.0px;background:#e9ebf5"></div>
<div class="a" style="left:942.8px;top:515.2px;width:72.7px;height:39.0px;background:#e9ebf5"></div>
<div class="a" style="left:1017.5px;top:515.2px;width:72.7px;height:39.0px;background:#e9ebf5"></div>
<div class="a" style="left:1092.3px;top:515.2px;width:72.7px;height:39.0px;background:#e9ebf5"></div>
<div class="a" style="left:1167.0px;top:515.2px;width:72.7px;height:39.0px;background:#e9ebf5"></div>
<div class="a" style="left:1241.7px;top:515.2px;width:72.7px;height:39.0px;background:#e9ebf5"></div>
<div class="a" style="left:1316.5px;top:515.2px;width:73.7px;height:39.0px;background:#e9ebf5"></div>
<div class="a" style="left:717.6px;top:556.2px;width:73.7px;height:38.9px;background:#cfd5ea"></div>
<div class="a" style="left:793.3px;top:556.2px;width:72.7px;height:38.9px;background:#cfd5ea"></div>
<div class="a" style="left:868.1px;top:556.2px;width:72.7px;height:38.9px;background:#cfd5ea"></div>
<div class="a" style="left:942.8px;top:556.2px;width:72.7px;height:38.9px;background:#cfd5ea"></div>
<div class="a" style="left:1017.5px;top:556.2px;width:72.7px;height:38.9px;background:#cfd5ea"></div>
<div class="a" style="left:1092.3px;top:556.2px;width:72.7px;height:38.9px;background:#cfd5ea"></div>
<div class="a" style="left:1167.0px;top:556.2px;width:72.7px;height:38.9px;background:#cfd5ea"></div>
<div class="a" style="left:1241.7px;top:556.2px;width:72.7px;height:38.9px;background:#cfd5ea"></div>
<div class="a" style="left:1316.5px;top:556.2px;width:73.7px;height:38.9px;background:#cfd5ea"></div>
<div class="a" style="left:717.6px;top:597.1px;width:73.7px;height:38.9px;background:#e9ebf5"></div>
<div class="a" style="left:793.3px;top:597.1px;width:72.7px;height:38.9px;background:#e9ebf5"></div>
<div class="a" style="left:868.1px;top:597.1px;width:72.7px;height:38.9px;background:#e9ebf5"></div>
<div class="a" style="left:942.8px;top:597.1px;width:72.7px;height:38.9px;background:#e9ebf5"></div>
<div class="a" style="left:1017.5px;top:597.1px;width:72.7px;height:38.9px;background:#e9ebf5"></div>
<div class="a" style="left:1092.3px;top:597.1px;width:72.7px;height:38.9px;background:#e9ebf5"></div>
<div class="a" style="left:1167.0px;top:597.1px;width:72.7px;height:38.9px;background:#e9ebf5"></div>
<div class="a" style="left:1241.7px;top:597.1px;width:72.7px;height:38.9px;background:#e9ebf5"></div>
<div class="a" style="left:1316.5px;top:597.1px;width:73.7px;height:38.9px;background:#e9ebf5"></div>
<div class="a" style="left:717.6px;top:638.0px;width:73.7px;height:39.4px;background:#cfd5ea"></div>
<div class="a" style="left:793.3px;top:638.0px;width:72.7px;height:39.4px;background:#cfd5ea"></div>
<div class="a" style="left:868.1px;top:638.0px;width:72.7px;height:39.4px;background:#cfd5ea"></div>
<div class="a" style="left:942.8px;top:638.0px;width:72.7px;height:39.4px;background:#cfd5ea"></div>
<div class="a" style="left:1017.5px;top:638.0px;width:72.7px;height:39.4px;background:#cfd5ea"></div>
<div class="a" style="left:1092.3px;top:638.0px;width:72.7px;height:39.4px;background:#cfd5ea"></div>
<div class="a" style="left:1167.0px;top:638.0px;width:72.7px;height:39.4px;background:#cfd5ea"></div>
<div class="a" style="left:1241.7px;top:638.0px;width:72.7px;height:39.4px;background:#cfd5ea"></div>
<div class="a" style="left:1316.5px;top:638.0px;width:73.7px;height:39.4px;background:#cfd5ea"></div>
<!--/TABLE-->
<!--/MAIN-->
<!--MENU-->
<div class="a" style="left:8px;top:93px;width:199px;height:289px;background:#fff;box-shadow:1px 1px 1px rgba(0,0,0,0.12);border-right:1px solid #cfcfcf;border-bottom:1px solid #d8d8d8"></div>
<div class="t" style="left:24.4px;top:107px;font-size:12px;font-weight:bold;color:#262626">9x8 Table</div>
<div class="a cell" style="left:13px;top:129.0px"></div>
<div class="a cell" style="left:32px;top:129.0px"></div>
<div class="a cell" style="left:51px;top:129.0px"></div>
<div class="a cell" style="left:70px;top:129.0px"></div>
<div class="a cell" style="left:89px;top:129.0px"></div>
<div class="a cell" style="left:108px;top:129.0px"></div>
<div class="a cell" style="left:127px;top:129.0px"></div>
<div class="a cell" style="left:146px;top:129.0px"></div>
<div class="a cell" style="left:165px;top:129.0px"></div>
<div class="a gcell" style="left:185px;top:130.0px"></div>
<div class="a cell" style="left:13px;top:147.9px"></div>
<div class="a cell" style="left:32px;top:147.9px"></div>
<div class="a cell" style="left:51px;top:147.9px"></div>
<div class="a cell" style="left:70px;top:147.9px"></div>
<div class="a cell" style="left:89px;top:147.9px"></div>
<div class="a cell" style="left:108px;top:147.9px"></div>
<div class="a cell" style="left:127px;top:147.9px"></div>
<div class="a cell" style="left:146px;top:147.9px"></div>
<div class="a cell" style="left:165px;top:147.9px"></div>
<div class="a gcell" style="left:185px;top:148.9px"></div>
<div class="a cell" style="left:13px;top:166.9px"></div>
<div class="a cell" style="left:32px;top:166.9px"></div>
<div class="a cell" style="left:51px;top:166.9px"></div>
<div class="a cell" style="left:70px;top:166.9px"></div>
<div class="a cell" style="left:89px;top:166.9px"></div>
<div class="a cell" style="left:108px;top:166.9px"></div>
<div class="a cell" style="left:127px;top:166.9px"></div>
<div class="a cell" style="left:146px;top:166.9px"></div>
<div class="a cell" style="left:165px;top:166.9px"></div>
<div class="a gcell" style="left:185px;top:167.9px"></div>
<div class="a cell" style="left:13px;top:185.8px"></div>
<div class="a cell" style="left:32px;top:185.8px"></div>
<div class="a cell" style="left:51px;top:185.8px"></div>
<div class="a cell" style="left:70px;top:185.8px"></div>
<div class="a cell" style="left:89px;top:185.8px"></div>
<div class="a cell" style="left:108px;top:185.8px"></div>
<div class="a cell" style="left:127px;top:185.8px"></div>
<div class="a cell" style="left:146px;top:185.8px"></div>
<div class="a cell" style="left:165px;top:185.8px"></div>
<div class="a gcell" style="left:185px;top:186.8px"></div>
<div class="a cell" style="left:13px;top:204.8px"></div>
<div class="a cell" style="left:32px;top:204.8px"></div>
<div class="a cell" style="left:51px;top:204.8px"></div>
<div class="a cell" style="left:70px;top:204.8px"></div>
<div class="a cell" style="left:89px;top:204.8px"></div>
<div class="a cell" style="left:108px;top:204.8px"></div>
<div class="a cell" style="left:127px;top:204.8px"></div>
<div class="a cell" style="left:146px;top:204.8px"></div>
<div class="a cell" style="left:165px;top:204.8px"></div>
<div class="a gcell" style="left:185px;top:205.8px"></div>
<div class="a cell" style="left:13px;top:223.8px"></div>
<div class="a cell" style="left:32px;top:223.8px"></div>
<div class="a cell" style="left:51px;top:223.8px"></div>
<div class="a cell" style="left:70px;top:223.8px"></div>
<div class="a cell" style="left:89px;top:223.8px"></div>
<div class="a cell" style="left:108px;top:223.8px"></div>
<div class="a cell" style="left:127px;top:223.8px"></div>
<div class="a cell" style="left:146px;top:223.8px"></div>
<div class="a cell" style="left:165px;top:223.8px"></div>
<div class="a gcell" style="left:185px;top:224.8px"></div>
<div class="a cell" style="left:13px;top:242.7px"></div>
<div class="a cell" style="left:32px;top:242.7px"></div>
<div class="a cell" style="left:51px;top:242.7px"></div>
<div class="a cell" style="left:70px;top:242.7px"></div>
<div class="a cell" style="left:89px;top:242.7px"></div>
<div class="a cell" style="left:108px;top:242.7px"></div>
<div class="a cell" style="left:127px;top:242.7px"></div>
<div class="a cell" style="left:146px;top:242.7px"></div>
<div class="a cell" style="left:165px;top:242.7px"></div>
<div class="a gcell" style="left:185px;top:243.7px"></div>
<div class="a cell" style="left:13px;top:261.6px"></div>
<div class="a cell" style="left:32px;top:261.6px"></div>
<div class="a cell" style="left:51px;top:261.6px"></div>
<div class="a cell" style="left:70px;top:261.6px"></div>
<div class="a cell" style="left:89px;top:261.6px"></div>
<div class="a cell" style="left:108px;top:261.6px"></div>
<div class="a cell" style="left:127px;top:261.6px"></div>
<div class="a cell" style="left:146px;top:261.6px"></div>
<div class="a cell" style="left:165px;top:261.6px"></div>
<div class="a gcell" style="left:185px;top:262.6px"></div>
<div class="a" style="left:12px;top:292px;width:194px;height:1px;background:#e1e1e1"></div>
<!--MI-->
<svg class="a" style="left:22px;top:299px" width="17" height="16" viewBox="0 0 17 16"><rect x="0.5" y="0.5" width="16" height="15" fill="#fff" stroke="#333" stroke-width="1"/><rect x="0.5" y="0.5" width="16" height="2.5" fill="#333"/><path d="M0.5 3.5H16.5M0.5 7.5H16.5M0.5 11.5H16.5M5.5 0.5V15.5M11 0.5V15.5" stroke="#333" stroke-width="1" fill="none"/></svg>
<div class="a" style="left:30px;top:307.2px;width:15px;height:16.5px;background:#4a4a4a;color:#fff;font-size:12px;line-height:17px;text-align:center">I</div>
<div class="t" style="left:47.4px;top:302.8px;font-size:12px;color:#262626">Insert Table…</div>
<div class="a" style="left:47.5px;top:314.2px;width:3.5px;height:1px;background:#262626"></div>
<svg class="a" style="left:22px;top:327px" width="17" height="16" viewBox="0 0 17 16"><rect x="0.5" y="0.5" width="16" height="15" fill="#fff" stroke="#333" stroke-width="1"/><rect x="0.5" y="0.5" width="16" height="2.5" fill="#333"/><path d="M0.5 3.5H16.5M0.5 7.5H16.5M0.5 11.5H16.5M5.5 0.5V15.5M11 0.5V15.5" stroke="#333" stroke-width="1" fill="none"/><path d="M8 11 L15 3" stroke="#3d8ed8" stroke-width="2.6" stroke-linecap="round"/></svg>
<div class="a" style="left:30px;top:335px;width:15px;height:16.5px;background:#4a4a4a;color:#fff;font-size:12px;line-height:17px;text-align:center">D</div>
<div class="t" style="left:47.4px;top:330.6px;font-size:12px;color:#262626">Draw Table</div>
<div class="a" style="left:47.5px;top:342.5px;width:8px;height:1px;background:#262626"></div>
<svg class="a" style="left:22px;top:355px" width="17" height="16" viewBox="0 0 17 16"><rect x="0.5" y="0.5" width="16" height="15" fill="#fff" stroke="#333" stroke-width="1"/><rect x="0.5" y="0.5" width="16" height="2.5" fill="#333"/><path d="M0.5 3.5H16.5M0.5 7.5H16.5M0.5 11.5H16.5M5.5 0.5V15.5M11 0.5V15.5" stroke="#333" stroke-width="1" fill="none"/><rect x="7" y="8" width="9" height="8" fill="#217346"/></svg>
<div class="a" style="left:30px;top:363px;width:15px;height:16.5px;background:#4a4a4a;color:#fff;font-size:12px;line-height:17px;text-align:center">X</div>
<div class="t" style="left:47.4px;top:358.6px;font-size:12px;color:#262626">Excel Spreadsheet</div>
<div class="a" style="left:55px;top:370.5px;width:6px;height:1px;background:#262626"></div>
<!--/MI-->
<div class="a" style="left:8px;top:92px;width:191px;height:289.6px;border:3px solid #e5453e"></div>
<!--/MENU-->
<svg class="a" style="left:0;top:0" width="1407" height="699"><polygon points="200.3,190.6 684.3,381.6 687.9,372.6 709.2,396.7 677.1,399.8 680.7,390.8 196.7,199.8" fill="#e8463d"/></svg>
</body></html>
